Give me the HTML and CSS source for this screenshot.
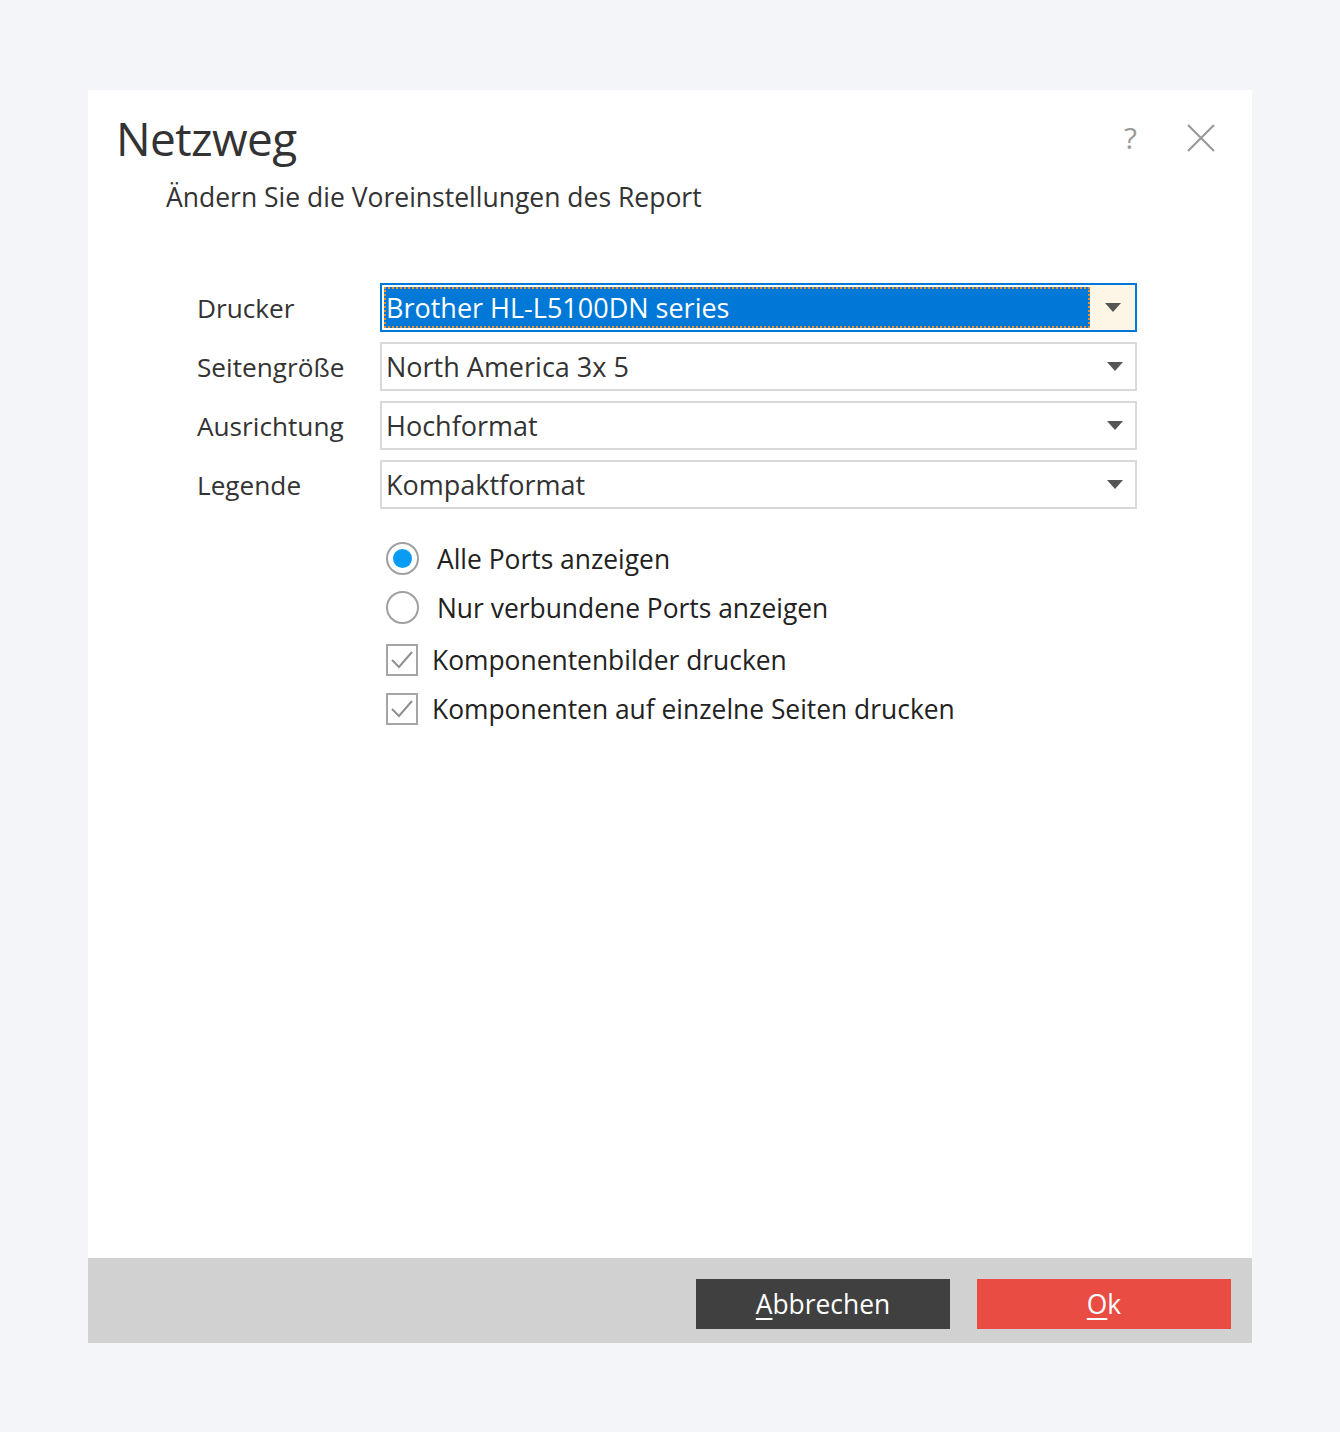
FILE: index.html
```html
<!DOCTYPE html>
<html lang="de">
<head>
<meta charset="utf-8">
<title>Netzweg</title>
<link rel="stylesheet" href="styles.css">
</head>
<body>
<div class="page">
  <div class="dialog">
    <div class="header">
      <div class="titles">
        <h1 class="title">Netzweg</h1>
        <p class="subtitle">Ändern Sie die Voreinstellungen des Report</p>
      </div>
      <div class="tools">
        <span class="help">?</span>
        <svg class="close" width="30" height="30" viewBox="0 0 30 30"><path d="M2 2 L28 28 M28 2 L2 28" stroke="#9a9a9a" stroke-width="2.2" fill="none"/></svg>
      </div>
    </div>
    <div class="content">
      <div class="form">
        <label class="label">Drucker</label>
        <div class="select focused">
          <span class="value"><span class="sel-text">Brother HL-L5100DN series</span></span>
          <span class="arrow"></span>
        </div>
        <label class="label">Seitengröße</label>
        <div class="select">
          <span class="value">North America 3x 5</span>
          <span class="arrow"></span>
        </div>
        <label class="label">Ausrichtung</label>
        <div class="select">
          <span class="value">Hochformat</span>
          <span class="arrow"></span>
        </div>
        <label class="label">Legende</label>
        <div class="select">
          <span class="value">Kompaktformat</span>
          <span class="arrow"></span>
        </div>
      </div>
      <div class="options">
        <div class="opt radio-row"><span class="radio checked"></span><span class="opt-text">Alle Ports anzeigen</span></div>
        <div class="opt radio-row"><span class="radio"></span><span class="opt-text">Nur verbundene Ports anzeigen</span></div>
        <div class="opt check-row"><span class="check"><svg width="28" height="28" viewBox="0 0 28 28"><path d="M4 14 L11 21 L24 6" stroke="#8f8f8f" stroke-width="2" fill="none"/></svg></span><span class="opt-text">Komponentenbilder drucken</span></div>
        <div class="opt check-row"><span class="check"><svg width="28" height="28" viewBox="0 0 28 28"><path d="M4 14 L11 21 L24 6" stroke="#8f8f8f" stroke-width="2" fill="none"/></svg></span><span class="opt-text">Komponenten auf einzelne Seiten drucken</span></div>
      </div>
    </div>
    <div class="footer">
      <button class="btn btn-cancel"><u>A</u>bbrechen</button>
      <button class="btn btn-ok"><u>O</u>k</button>
    </div>
  </div>
</div>
</body>
</html>
```

FILE: styles.css
```css
html, body {
  margin: 0;
  padding: 0;
}
body {
  background: #f4f5f9;
  font-family: "Open Sans", "Noto Sans", "Liberation Sans", sans-serif;
  color: #333;
}
.page {
  padding: 90px 88px 0 88px;
}
.dialog {
  width: 1164px;
  height: 1253px;
  background: #fff;
  display: flex;
  flex-direction: column;
}
.header {
  display: flex;
  justify-content: space-between;
  padding: 0 0 0 28px;
}
.title {
  margin: 0;
  padding-top: 20px;
  font-weight: 400;
  font-size: 46px;
  line-height: 56px;
  color: #333;
  letter-spacing: -0.6px;
}
.subtitle {
  margin: 0;
  padding-left: 50px;
  padding-top: 14px;
  font-size: 26.5px;
  line-height: 34px;
  color: #333;
}
.tools {
  display: flex;
  align-items: center;
  gap: 49px;
  padding: 28px 36px 0 0;
  height: 40px;
}
.help {
  font-size: 30px;
  color: #9a9a9a;
  line-height: 40px;
}
.close {
  display: block;
}
.content {
  flex: 1;
  padding: 69px 0 0 109px;
}
.form {
  display: grid;
  grid-template-columns: 183px 757px;
  row-gap: 10px;
  align-items: center;
}
.label {
  font-size: 26.2px;
  color: #333;
}
.select {
  box-sizing: border-box;
  height: 49px;
  border: 2px solid #d9d9d9;
  display: flex;
  align-items: stretch;
  background: #fff;
}
.select .value {
  flex: 1;
  display: flex;
  align-items: center;
  padding-left: 4px;
  font-size: 27px;
  color: #333;
}
.select .arrow {
  width: 40px;
  display: flex;
  align-items: center;
  justify-content: center;
}
.select .arrow::after {
  content: "";
  border-left: 8px solid transparent;
  border-right: 8px solid transparent;
  border-top: 9px solid #555;
}
.select.focused {
  border-color: #0078d7;
}
.select.focused .value {
  padding: 2px 0 2px 2px;
}
.select.focused .sel-text {
  flex: 1;
  align-self: stretch;
  display: flex;
  align-items: center;
  background: #0078d7;
  color: #fff;
  padding-left: 2px;
  outline: 2px dotted #e8912b;
  outline-offset: -2px;
}
.select.focused .arrow {
  background: #fdf6e6;
  width: 45px;
}
.options {
  padding: 25px 0 0 189px;
  display: flex;
  flex-direction: column;
}
.opt {
  display: flex;
  align-items: center;
  height: 49px;
  font-size: 26.4px;
  color: #333;
}
.opt-text {
  color: #222;
}
.radio {
  box-sizing: border-box;
  width: 33px;
  height: 33px;
  border-radius: 50%;
  border: 2px solid #a0a0a0;
  margin-right: 18px;
  display: flex;
  align-items: center;
  justify-content: center;
}
.radio.checked::after {
  content: "";
  width: 19px;
  height: 19px;
  border-radius: 50%;
  background: #0a9bf5;
}
.radio-row:nth-child(2) {
  margin-bottom: 3px;
}
.check {
  box-sizing: border-box;
  width: 32px;
  height: 32px;
  border: 2px solid #a5a5a5;
  margin-right: 14px;
  display: flex;
  align-items: center;
  justify-content: center;
}
.check svg {
  display: block;
}
.footer {
  box-sizing: border-box;
  height: 85px;
  background: #d1d1d1;
  display: flex;
  justify-content: flex-end;
  align-items: flex-start;
  gap: 27px;
  padding: 21px 21px 0 0;
}
.btn {
  width: 254px;
  height: 50px;
  border: none;
  font-family: inherit;
  font-size: 26.4px;
  color: #fff;
  cursor: pointer;
}
.btn u {
  text-underline-offset: 4px;
}
.btn-cancel {
  background: #404040;
}
.btn-ok {
  background: #e84c43;
}
```
